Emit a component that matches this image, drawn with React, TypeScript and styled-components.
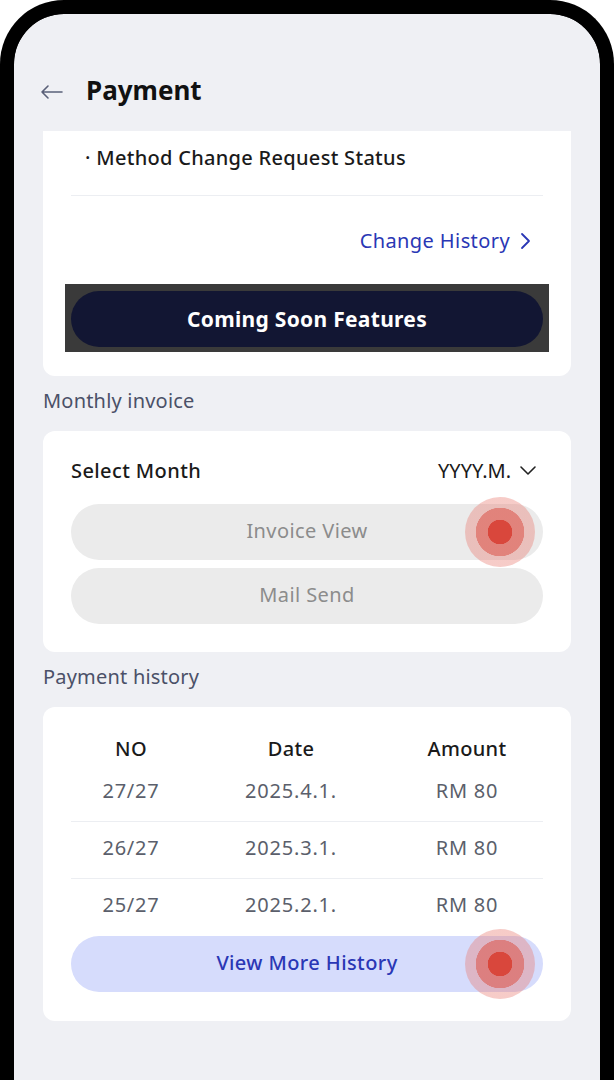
import styled, { createGlobalStyle } from "styled-components";

const GlobalStyle = createGlobalStyle`
  html, body {
    margin: 0;
    padding: 0;
    background: #ffffff;
  }
  body {
    font-family: "Noto Sans", "Liberation Sans", sans-serif;
    -webkit-font-smoothing: antialiased;
  }
`;

const rows = [
  { no: "27/27", date: "2025.4.1.", amount: "RM 80" },
  { no: "26/27", date: "2025.3.1.", amount: "RM 80" },
  { no: "25/27", date: "2025.2.1.", amount: "RM 80" },
];

const BackArrow = () => (
  <svg width="24" height="16" viewBox="0 0 24 16" fill="none">
    <path
      d="M8 2 L2 8 L8 14 M2 8 H22"
      stroke="#5a6078"
      strokeWidth="1.6"
      strokeLinecap="round"
      strokeLinejoin="round"
    />
  </svg>
);

const ChevronRight = () => (
  <svg width="12" height="20" viewBox="0 0 12 20" fill="none">
    <path d="M3 3 L10 10 L3 17" stroke="#2a37b5" strokeWidth="1.8" strokeLinecap="round" strokeLinejoin="round" />
  </svg>
);

const ChevronDown = () => (
  <svg width="18" height="12" viewBox="0 0 18 12" fill="none">
    <path d="M2 3 L9 10 L16 3" stroke="#222" strokeWidth="1.6" strokeLinecap="round" strokeLinejoin="round" />
  </svg>
);

const App = () => {
  return (
    <>
      <GlobalStyle />
      <PhoneFrame>
        <Screen>
          <Header>
            <BackButton>
              <BackArrow />
            </BackButton>
            <HeaderTitle>Payment</HeaderTitle>
          </Header>

          <Content>
            <Card flatTop>
              <MethodRow>· Method Change Request Status</MethodRow>
              <LinkRow>
                <LinkText>Change History</LinkText>
                <ChevronRight />
              </LinkRow>
              <SoonOverlay>
                <SoonButton>Coming Soon Features</SoonButton>
              </SoonOverlay>
            </Card>

            <SectionLabel>Monthly invoice</SectionLabel>
            <Card>
              <SelectRow>
                <SelectLabel>Select Month</SelectLabel>
                <SelectValue>
                  YYYY.M.
                  <ChevronDown />
                </SelectValue>
              </SelectRow>
              <ButtonStack>
                <PillButton variant="disabled">
                  Invoice View
                  <TouchMark />
                </PillButton>
                <PillButton variant="disabled">Mail Send</PillButton>
              </ButtonStack>
            </Card>

            <SectionLabel>Payment history</SectionLabel>
            <Card tight>
              <Table>
                <HeadRow>
                  <HeadCell>NO</HeadCell>
                  <HeadCell>Date</HeadCell>
                  <HeadCell>Amount</HeadCell>
                </HeadRow>
                {rows.map((r, i) => (
                  <DataRow key={r.no} last={i === rows.length - 1}>
                    <DataCell>{r.no}</DataCell>
                    <DataCell>{r.date}</DataCell>
                    <DataCell>{r.amount}</DataCell>
                  </DataRow>
                ))}
              </Table>
              <PillButton variant="soft">
                View More History
                <TouchMark />
              </PillButton>
            </Card>
          </Content>
        </Screen>
      </PhoneFrame>
    </>
  );
};

export default App;

const PhoneFrame = styled.div`
  width: 614px;
  height: 1080px;
  box-sizing: border-box;
  border: 14px solid #000;
  border-bottom: none;
  border-radius: 64px 64px 0 0;
  overflow: hidden;
  background: #000;
`;

const Screen = styled.div`
  width: 100%;
  height: 100%;
  background: #eff0f4;
  border-radius: 50px 50px 0 0;
  overflow: hidden;
`;

const Header = styled.div`
  height: 117px;
  box-sizing: border-box;
  padding: 59px 0 0 26px;
  display: flex;
  align-items: flex-start;
  gap: 22px;
`;

const BackButton = styled.div`
  width: 24px;
  height: 34px;
  display: flex;
  align-items: center;
  padding-top: 4px;
  box-sizing: border-box;
`;

const HeaderTitle = styled.h1`
  margin: 0;
  font-size: 26px;
  line-height: 34px;
  font-weight: 700;
  color: #111;
`;

const Content = styled.div`
  padding: 0 29px;
  display: flex;
  flex-direction: column;
`;

const Card = styled.div<{ flatTop?: boolean; tight?: boolean }>`
  background: #fff;
  border-radius: ${(p) => (p.flatTop ? "0 0 12px 12px" : "12px")};
  box-sizing: border-box;
  padding: ${(p) => (p.flatTop ? "0 28px 24px" : p.tight ? "24px 28px 29px" : "27px 28px 28px")};
  display: flex;
  flex-direction: column;
`;

const MethodRow = styled.div`
  padding: 14px 0 25px 14px;
  border-bottom: 1px solid #eceef2;
  font-size: 20px;
  line-height: 25px;
  letter-spacing: 0.3px;
  font-weight: 500;
  color: #1a1a1a;
`;

const LinkRow = styled.div`
  margin-top: 33px;
  display: flex;
  justify-content: flex-end;
  align-items: center;
  gap: 9px;
  padding-right: 12px;
`;

const LinkText = styled.span`
  font-size: 20px;
  line-height: 24px;
  letter-spacing: 0.4px;
  color: #2a37b5;
`;

const SoonOverlay = styled.div`
  margin: 31px -6px 0;
  padding: 7px 6px 5px;
  background: #3a3a3a;
`;

const SoonButton = styled.div`
  height: 56px;
  border-radius: 28px;
  background: #121633;
  color: #fff;
  display: flex;
  align-items: center;
  justify-content: center;
  font-size: 21px;
  letter-spacing: 0.3px;
  font-weight: 700;
`;

const SectionLabel = styled.div`
  margin: 13px 0 18px;
  font-size: 20px;
  line-height: 24px;
  letter-spacing: 0.2px;
  color: #4b5168;
`;

const SelectRow = styled.div`
  display: flex;
  justify-content: space-between;
  align-items: center;
  height: 24px;
`;

const SelectLabel = styled.span`
  font-size: 20px;
  letter-spacing: 0.4px;
  font-weight: 500;
  color: #1a1a1a;
`;

const SelectValue = styled.span`
  display: flex;
  align-items: center;
  gap: 8px;
  font-size: 20px;
  color: #1a1a1a;
  padding-right: 6px;
`;

const ButtonStack = styled.div`
  margin-top: 22px;
  display: flex;
  flex-direction: column;
  gap: 8px;
`;

const PillButton = styled.div<{ variant: "disabled" | "soft" }>`
  position: relative;
  height: 56px;
  border-radius: 28px;
  display: flex;
  align-items: center;
  justify-content: center;
  padding-bottom: 3px;
  box-sizing: border-box;
  font-size: 20px;
  letter-spacing: 0.4px;
  background: ${(p) => (p.variant === "soft" ? "#d6dcfc" : "#ebebeb")};
  color: ${(p) => (p.variant === "soft" ? "#2a37b5" : "#8c8c8c")};
  font-weight: ${(p) => (p.variant === "soft" ? 500 : 400)};
`;

const TouchMark = styled.span`
  position: absolute;
  right: 8px;
  top: 50%;
  width: 70px;
  height: 70px;
  margin-top: -35px;
  border-radius: 50%;
  background: radial-gradient(
    circle,
    #d9473c 0 12px,
    rgba(222, 96, 86, 0.75) 12.5px 24px,
    rgba(232, 120, 110, 0.38) 24.5px 35px
  );
`;

const Table = styled.div`
  display: flex;
  flex-direction: column;
`;

const HeadRow = styled.div`
  display: grid;
  grid-template-columns: 120px 200px 152px;
  height: 34px;
  align-items: center;
`;

const HeadCell = styled.div`
  text-align: center;
  font-size: 20px;
  letter-spacing: 0.3px;
  font-weight: 500;
  color: #1a1a1a;
`;

const DataRow = styled.div<{ last: boolean }>`
  display: grid;
  grid-template-columns: 120px 200px 152px;
  height: 57px;
  box-sizing: border-box;
  align-items: center;
  padding-bottom: 6px;
  border-bottom: ${(p) => (p.last ? "none" : "1px solid #eceef2")};
`;

const DataCell = styled.div`
  text-align: center;
  font-size: 20px;
  letter-spacing: 0.8px;
  color: #5b5f6b;
`;
